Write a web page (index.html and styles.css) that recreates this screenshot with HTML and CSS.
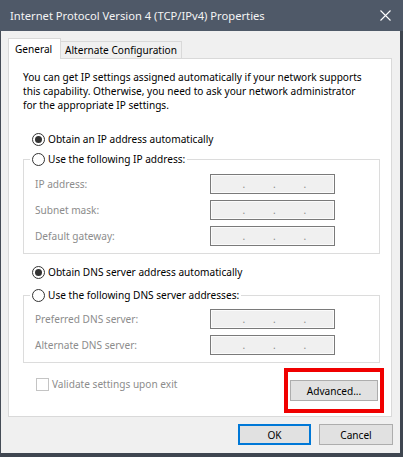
FILE: index.html
```html
<!DOCTYPE html>
<html>
<head>
<meta charset="utf-8">
<link rel="stylesheet" href="styles.css">
</head>
<body>
<div class="window">
  <div class="titlebar">
    <span class="title">Internet Protocol Version 4 (TCP/IPv4) Properties</span>
    <svg class="close" width="11" height="11" viewBox="0 0 11 11"><path d="M0.5 0.5 L10.5 10.5 M10.5 0.5 L0.5 10.5" stroke="#ffffff" stroke-width="1.1" fill="none"/></svg>
  </div>
  <div class="client">
    <div class="tabs">
      <div class="tab active">General</div>
      <div class="tab">Alternate Configuration</div>
    </div>
    <div class="panel">
      <p class="intro">You can get IP settings assigned automatically if your network supports<br>this capability. Otherwise, you need to ask your network administrator<br>for the appropriate IP settings.</p>

      <div class="radio-row first"><span class="radio checked"></span><span>Obtain an IP address automatically</span></div>
      <fieldset class="group ip-group">
        <legend class="radio-row"><span class="radio"></span><span>Use the following IP address:</span></legend>
        <div class="rows">
          <div class="field-row"><span class="flabel">IP address:</span><div class="ipbox"><span class="seg"></span><span class="dot">.</span><span class="seg"></span><span class="dot">.</span><span class="seg"></span><span class="dot">.</span><span class="seg"></span></div></div>
          <div class="field-row"><span class="flabel">Subnet mask:</span><div class="ipbox"><span class="seg"></span><span class="dot">.</span><span class="seg"></span><span class="dot">.</span><span class="seg"></span><span class="dot">.</span><span class="seg"></span></div></div>
          <div class="field-row"><span class="flabel">Default gateway:</span><div class="ipbox"><span class="seg"></span><span class="dot">.</span><span class="seg"></span><span class="dot">.</span><span class="seg"></span><span class="dot">.</span><span class="seg"></span></div></div>
        </div>
      </fieldset>

      <div class="radio-row dns-first"><span class="radio checked"></span><span>Obtain DNS server address automatically</span></div>
      <fieldset class="group dns-group">
        <legend class="radio-row"><span class="radio"></span><span>Use the following DNS server addresses:</span></legend>
        <div class="rows dns-rows">
          <div class="field-row"><span class="flabel">Preferred DNS server:</span><div class="ipbox"><span class="seg"></span><span class="dot">.</span><span class="seg"></span><span class="dot">.</span><span class="seg"></span><span class="dot">.</span><span class="seg"></span></div></div>
          <div class="field-row"><span class="flabel">Alternate DNS server:</span><div class="ipbox"><span class="seg"></span><span class="dot">.</span><span class="seg"></span><span class="dot">.</span><span class="seg"></span><span class="dot">.</span><span class="seg"></span></div></div>
        </div>
      </fieldset>

      <div class="bottom-row">
        <div class="check"><span class="box"></span><span>Validate settings upon exit</span></div>
        <div class="highlight"><div class="btn adv">Advanced...</div></div>
      </div>
    </div>
    <div class="actions">
      <div class="btn ok">OK</div>
      <div class="btn cancel">Cancel</div>
    </div>
  </div>
</div>
</body>
</html>
```
FILE: styles.css
```css
* { box-sizing: border-box; }
body {
  margin: 0;
  font-family: "Noto Sans", "DejaVu Sans", sans-serif;
  font-size: 10.1px;
  color: #000;
  background: #f0f0f0;
}
.window {
  width: 403px;
  height: 457px;
  display: flex;
  flex-direction: column;
  background: #f0f0f0;
}
.titlebar {
  flex: none;
  height: 31px;
  background: #4f5968;
  color: #f4f4f4;
  display: flex;
  align-items: center;
  justify-content: space-between;
  padding: 0 12px 0 10px;
  font-size: 11.2px;
}
.close { display: block; }
.client {
  flex: 1;
  border-left: 1px solid #454c56;
  border-right: 3px solid #3f4650;
  border-bottom: 4px solid #3f4650;
  padding: 7px 8px 0 7px;
  display: flex;
  flex-direction: column;
}
.tabs {
  display: flex;
  align-items: flex-end;
  height: 20px;
  position: relative;
  z-index: 1;
}
.tab {
  border: 1px solid #d9d9d9;
  border-bottom: none;
  background: #f0f0f0;
  height: 17px;
  width: 122px;
  margin-left: -1px;
  display: flex;
  align-items: center;
  padding-left: 4px;
  white-space: nowrap;
}
.tab.active {
  background: #fff;
  height: 21px;
  width: 53px;
  margin-left: 0;
  margin-bottom: -1px;
  padding-left: 6px;
  position: relative;
  z-index: 2;
}
.panel {
  height: 359px;
  border: 1px solid #d9d9d9;
  background: #fff;
  padding: 0 0 0 14px;
  display: flex;
  flex-direction: column;
  white-space: nowrap;
}
.intro {
  margin: 11px 0 0 0;
  line-height: 14px;
}
.radio-row {
  display: flex;
  align-items: center;
  height: 16px;
  gap: 3px;
}
.radio-row.first { margin: 19px 0 0 9px; }
.radio {
  width: 13px;
  height: 13px;
  border: 1px solid #333;
  border-radius: 50%;
  background: #fff;
  display: flex;
  align-items: center;
  justify-content: center;
  flex: none;
}
.radio.checked::after {
  content: "";
  width: 7px;
  height: 7px;
  border-radius: 50%;
  background: #333;
}
.group {
  width: 357px;
  margin: 4px 0 0 0;
  padding: 0;
  border: 1px solid #dcdcdc;
  min-width: 0;
}
.group legend {
  margin-left: 6px;
  padding: 0 2px;
}
.rows {
  padding: 7px 0 7px 11px;
  display: flex;
  flex-direction: column;
  gap: 6px;
}
.rows.dns-rows { padding-top: 6px; }
.field-row {
  display: flex;
  align-items: center;
  height: 20px;
}
.flabel {
  width: 175px;
  color: #8c8c8c;
}
.ipbox {
  width: 125px;
  height: 20px;
  border: 1px solid #7a7a7a;
  background: #f0f0f0;
  box-shadow: inset 0 0 0 1px #fbfbfb;
  display: flex;
  align-items: flex-end;
  padding-left: 3px;
  line-height: 14px;
  color: #8c8c8c;
}
.seg { width: 29px; }
.dot { width: 2px; text-align: center; padding-bottom: 2px; }
.radio-row.dns-first { margin: 10px 0 0 9px; }
.dns-group { margin-top: 7px; }
.bottom-row {
  display: flex;
  align-items: flex-start;
  justify-content: space-between;
  margin-top: 5px;
  width: 361px;
}
.check {
  display: flex;
  align-items: center;
  gap: 3px;
  color: #8c8c8c;
  margin: 9px 0 0 13px;
}
.box {
  width: 13px;
  height: 13px;
  border: 1px solid #c4c4c4;
  background: #fff;
}
.highlight {
  border: 4px solid #f00000;
  padding: 8px 2px;
}
.btn {
  height: 21px;
  border: 1px solid #adadad;
  background: #e1e1e1;
  display: flex;
  align-items: center;
  justify-content: center;
}
.btn.adv { width: 88px; }
.actions {
  display: flex;
  justify-content: flex-end;
  gap: 8px;
  margin-top: 7px;
  padding-right: 0;
}
.btn.ok {
  width: 73px;
  border: 2px solid #0078d7;
}
.btn.cancel { width: 74px; margin-right: -1px; }
```
